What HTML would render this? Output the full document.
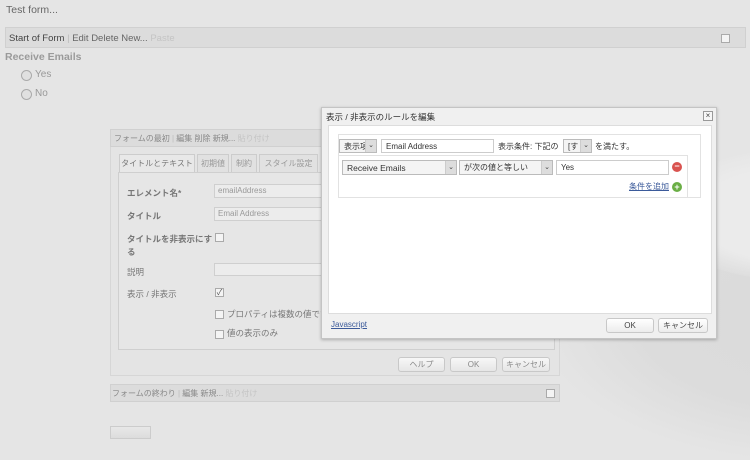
<!DOCTYPE html>
<html><head><meta charset="utf-8">
<style>
*{box-sizing:border-box;margin:0;padding:0}
body{width:750px;height:454px;overflow:hidden;position:relative;background:#e5e5e5;font-family:"Liberation Sans","Noto Sans CJK JP",sans-serif;font-size:9px;color:#444}
.a{position:absolute}
.sw1{left:540px;top:200px;width:460px;height:260px;border-radius:50%;background:radial-gradient(ellipse at 60% 45%,#dadada 0%,#dcdcdc 45%,rgba(229,229,229,0) 72%)}
.sw2{left:660px;top:150px;width:260px;height:130px;border-radius:50%;background:radial-gradient(ellipse,#ebebeb 50%,rgba(235,235,235,0) 75%)}
.bar{background:#dcdcdc;border:1px solid #d0d0d0}
.cb{width:9px;height:9px;border:1px solid #aaa;background:#f4f4f4}
.btn{border:1px solid #c8c8c8;border-radius:3px;background:linear-gradient(#f7f7f7,#e6e6e6);text-align:center;line-height:13px;font-size:8px;color:#888}
.in{border:1px solid #cfcfcf;background:#ececec;color:#999;font-size:8px;padding-left:3px;line-height:12px}
.lab{font-size:8.5px;color:#777}
.tab{top:154px;height:18px;border:1px solid #ccc;border-bottom:none;background:#e1e1e1;font-size:8px;color:#999;line-height:17px;text-align:center;white-space:nowrap;overflow:hidden}
.sel{border:1px solid #bbb;background:#f4f4f4;font-size:8.5px;color:#333;line-height:13px;padding-left:4px;white-space:nowrap;overflow:hidden}
.arr{position:absolute;right:0;top:0;width:11px;height:100%;background:#ddd;border-left:1px solid #ccc;font-size:7px;text-align:center;line-height:12px;color:#444}
</style></head><body>
<div class="a sw1"></div>
<div class="a sw2"></div>

<div class="a" style="left:6px;top:4px;font-size:10.5px;color:#666">Test form...</div>
<div class="a bar" style="left:5px;top:27px;width:741px;height:21px"></div>
<div class="a" style="left:9px;top:33px;font-size:9.5px;color:#444">Start of Form<span style="color:#bbb"> | </span><span style="color:#666">Edit Delete New...</span> <span style="color:#c4c4c4">Paste</span></div>
<div class="a cb" style="left:721px;top:34px"></div>
<div class="a" style="left:5px;top:51px;font-size:10.5px;font-weight:bold;color:#9a9a9a">Receive Emails</div>
<div class="a" style="left:21px;top:70px;width:11px;height:11px;border:1px solid #aaa;border-radius:50%;background:#e0e0e0"></div>
<div class="a" style="left:35px;top:69px;font-size:10px;color:#999">Yes</div>
<div class="a" style="left:21px;top:89px;width:11px;height:11px;border:1px solid #aaa;border-radius:50%;background:#e0e0e0"></div>
<div class="a" style="left:35px;top:88px;font-size:10px;color:#999">No</div>

<!-- background dialog -->
<div class="a" style="left:110px;top:129px;width:450px;height:247px;border:1px solid #d6d6d6;background:#e4e4e4"></div>
<div class="a bar" style="left:110px;top:129px;width:450px;height:18px"></div>
<div class="a" style="left:114px;top:133px;font-size:8px;color:#888">フォームの最初 <span style="color:#bbb">|</span> 編集 削除 新規... <span style="color:#c4c4c4">貼り付け</span></div>
<div class="a" style="left:118px;top:172px;width:437px;height:178px;border:1px solid #cfcfcf;background:#e6e6e6"></div>
<div class="a tab" style="left:119px;width:76px;background:#e8e8e8;color:#777">タイトルとテキスト</div>
<div class="a tab" style="left:197px;width:32px">初期値</div>
<div class="a tab" style="left:231px;width:26px">制約</div>
<div class="a tab" style="left:259px;width:59px">スタイル設定</div>
<div class="a lab" style="left:127px;top:187px;font-weight:bold">エレメント名*</div>
<div class="a in" style="left:214px;top:184px;width:110px;height:14px">emailAddress</div>
<div class="a lab" style="left:127px;top:210px;font-weight:bold">タイトル</div>
<div class="a in" style="left:214px;top:207px;width:110px;height:14px">Email Address</div>
<div class="a lab" style="left:127px;top:233px;font-weight:bold;line-height:13px">タイトルを非表示にす<br>る</div>
<div class="a cb" style="left:215px;top:233px"></div>
<div class="a lab" style="left:127px;top:266px">説明</div>
<div class="a in" style="left:214px;top:263px;width:110px;height:13px"></div>
<div class="a lab" style="left:127px;top:288px">表示 / 非表示</div>
<div class="a cb" style="left:215px;top:288px;font-size:8px;line-height:7px;color:#555;text-align:center">✓</div>
<div class="a cb" style="left:215px;top:310px"></div>
<div class="a lab" style="left:227px;top:308px">プロパティは複数の値です</div>
<div class="a cb" style="left:215px;top:330px"></div>
<div class="a lab" style="left:227px;top:327px">値の表示のみ</div>
<div class="a btn" style="left:398px;top:357px;width:47px;height:15px">ヘルプ</div>
<div class="a btn" style="left:450px;top:357px;width:47px;height:15px">OK</div>
<div class="a btn" style="left:502px;top:357px;width:48px;height:15px">キャンセル</div>

<div class="a bar" style="left:110px;top:384px;width:450px;height:18px"></div>
<div class="a" style="left:112px;top:388px;font-size:8px;color:#888">フォームの終わり <span style="color:#bbb">|</span> 編集 新規... <span style="color:#c4c4c4">貼り付け</span></div>
<div class="a cb" style="left:546px;top:389px"></div>
<div class="a" style="left:110px;top:426px;width:41px;height:13px;border:1px solid #ccc;background:linear-gradient(#e8e8e8,#dcdcdc)"></div>

<!-- front dialog -->
<div class="a" style="left:321px;top:107px;width:396px;height:232px;background:#f0f0f0;border:1px solid #c4c4c4;box-shadow:0 1px 3px rgba(0,0,0,.25)"></div>
<div class="a" style="left:326px;top:111px;font-size:8.5px;color:#333">表示 / 非表示のルールを編集</div>
<div class="a" style="left:703px;top:111px;width:10px;height:10px;border:1px solid #999;background:#f6f6f6;font-size:8px;line-height:8px;text-align:center;color:#444">×</div>
<div class="a" style="left:328px;top:125px;width:384px;height:189px;background:#fff;border:1px solid #ddd"></div>
<div class="a" style="left:338px;top:134px;width:363px;height:64px;border:1px solid #e2e2e2"></div>
<div class="a sel" style="left:339px;top:139px;width:38px;height:14px;font-size:8px">表示項<div class="arr">⌄</div></div>
<div class="a sel" style="left:381px;top:139px;width:113px;height:14px;background:#fff;border-color:#ccc;font-size:8px">Email Address</div>
<div class="a" style="left:498px;top:141px;font-size:8px;color:#333">表示条件: 下記の</div>
<div class="a sel" style="left:563px;top:139px;width:29px;height:14px;font-size:8px">[す<div class="arr">⌄</div></div>
<div class="a" style="left:595px;top:141px;font-size:8px;color:#333">を満たす。</div>
<div class="a" style="left:338px;top:155px;width:350px;height:43px;border:1px solid #e2e2e2"></div>
<div class="a sel" style="left:342px;top:160px;width:115px;height:15px;line-height:14px">Receive Emails<div class="arr" style="line-height:13px">⌄</div></div>
<div class="a sel" style="left:459px;top:160px;width:94px;height:15px;line-height:14px;font-size:8px">が次の値と等しい<div class="arr" style="line-height:13px">⌄</div></div>
<div class="a sel" style="left:556px;top:160px;width:113px;height:15px;background:#fff;border-color:#ccc;font-size:8px">Yes</div>
<div class="a" style="left:672px;top:162px;width:10px;height:10px;border-radius:50%;background:#d9534f;color:#fff;font-size:9px;line-height:9px;text-align:center;font-weight:bold">−</div>
<div class="a" style="left:629px;top:181px;font-size:8px;color:#3b5a9a;text-decoration:underline">条件を追加</div>
<div class="a" style="left:672px;top:182px;width:10px;height:10px;border-radius:50%;background:#6aae45;color:#fff;font-size:9px;line-height:10px;text-align:center;font-weight:bold">+</div>
<div class="a" style="left:331px;top:320px;font-size:8px;color:#3b5a9a;text-decoration:underline">Javascript</div>
<div class="a btn" style="left:606px;top:318px;width:48px;height:15px;color:#444;background:linear-gradient(#fff,#ececec)">OK</div>
<div class="a btn" style="left:658px;top:318px;width:50px;height:15px;color:#444;background:linear-gradient(#fff,#ececec)">キャンセル</div>
</body></html>
